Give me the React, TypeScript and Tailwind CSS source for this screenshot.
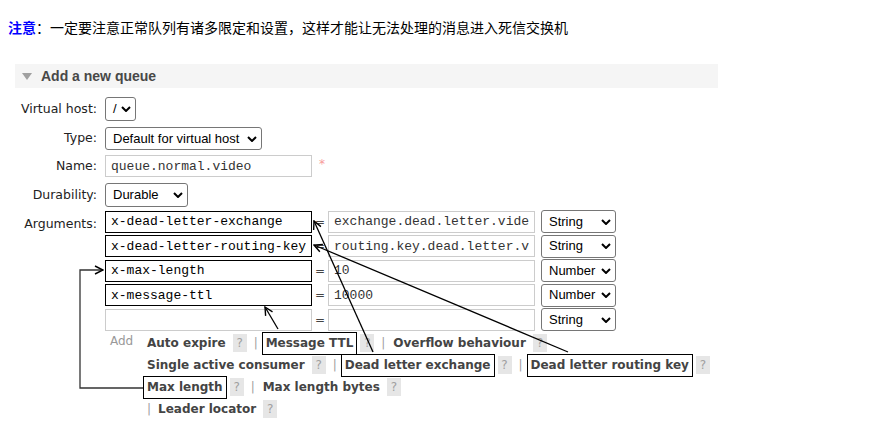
import React from "react";

const dv = "font-['DejaVu_Sans','Verdana',sans-serif]";
const arial = "font-['Liberation_Sans','Arial',sans-serif]";
const mono = "font-['Liberation_Mono','Courier_New',monospace]";

function Chevron() {
  return (
    <svg width="10" height="6" viewBox="0 0 10 6" className="shrink-0">
      <path d="M1 1L5 5L9 1" fill="none" stroke="#000" strokeWidth="2" />
    </svg>
  );
}

function FakeSelect({ value, className }: { value: string; className: string }) {
  return (
    <div
      className={`flex items-center justify-between rounded-[3px] border border-[#767676] bg-white pl-[7px] pr-[4px] text-[13px] text-black ${arial} ${className}`}
    >
      <span className="whitespace-nowrap">{value}</span>
      <Chevron />
    </div>
  );
}

function Help() {
  return (
    <span className="ml-[7px] inline-flex h-[18px] w-[14px] items-center justify-center bg-[#e6e6e6] text-[12px] font-normal text-[#a0a0a0]">
      ?
    </span>
  );
}

function Sep() {
  return <span className="w-[19px] pl-[7px] font-normal text-[#a0a0a0]">|</span>;
}

function Opt({ label, boxed }: { label: string; boxed?: boolean }) {
  return (
    <span
      className={`inline-block leading-[15px] ${
        boxed ? "outline outline-offset-[3px] outline-black" : ""
      }`}
    >
      {label}
    </span>
  );
}

const args = [
  { key: "x-dead-letter-exchange", value: "exchange.dead.letter.video", type: "String", marked: true },
  { key: "x-dead-letter-routing-key", value: "routing.key.dead.letter.video", type: "String", marked: true },
  { key: "x-max-length", value: "10", type: "Number", marked: true },
  { key: "x-message-ttl", value: "10000", type: "Number", marked: true },
  { key: "", value: "", type: "String", marked: false },
];

export default function App() {
  return (
    <div className="relative h-[426px] w-[893px] overflow-hidden bg-white text-[#222]">
      <p className="pl-[8px] pt-[17px] text-[14px] leading-[20px] text-black font-['Noto_Sans_CJK_SC','Microsoft_YaHei',sans-serif]">
        <span className="font-bold text-[#0000ff]">注意</span>：一定要注意正常队列有诸多限定和设置，这样才能让无法处理的消息进入死信交换机
      </p>

      <section className="ml-[15px] mt-[27px] w-[703px]">
        <div className="flex h-[24px] items-center bg-[#f5f5f5] pl-[7px]">
          <svg width="10" height="7" viewBox="0 0 10 7">
            <polygon points="0,0 10,0 5,7" fill="#a0a0a0" />
          </svg>
          <h2 className={`ml-[9px] text-[14px] font-bold text-[#484848] ${arial}`}>Add a new queue</h2>
        </div>

        <div className={`text-[12px] ${dv}`}>
          <div className="mt-[9px] flex h-[24px] items-center">
            <label className="w-[82px] text-right text-[12.5px]">Virtual host:</label>
            <FakeSelect value="/" className="ml-[8px] h-[24px] w-[31px]" />
          </div>
          <div className="mt-[6px] flex h-[23px] items-center">
            <label className="w-[82px] text-right text-[12.5px]">Type:</label>
            <FakeSelect value="Default for virtual host" className="ml-[8px] h-[23px] w-[157px]" />
          </div>
          <div className="mt-[5px] flex h-[22px] items-center">
            <label className="w-[82px] text-right text-[12.5px]">Name:</label>
            <input
              readOnly
              defaultValue="queue.normal.video"
              className={`ml-[8px] h-[22px] w-[207px] border border-[#ccc] px-[5px] text-[13px] text-[#333] outline-none ${mono}`}
            />
            <span className="ml-[7px] self-start text-[12px] text-[#f79a9a]">*</span>
          </div>
          <div className="mt-[6px] flex h-[24px] items-center">
            <label className="w-[82px] text-right text-[12.5px]">Durability:</label>
            <FakeSelect value="Durable" className="ml-[8px] h-[24px] w-[83px]" />
          </div>

          <div className="mt-[3px] flex">
            <label className="w-[82px] pt-[6px] text-right text-[12.5px] leading-[15px]">Arguments:</label>
            <div className="ml-[8px] flex flex-col gap-[1.5px]">
              {args.map((a, i) => (
                <div key={i} className="flex h-[23px] items-center">
                  <input
                    readOnly
                    defaultValue={a.key}
                    className={`h-[22px] w-[207px] px-[5px] text-[13px] text-black outline-none ${mono} ${
                      a.marked ? "border-[1.5px] border-black" : "border border-[#ccc]"
                    }`}
                  />
                  <span className="w-[16px] text-center text-[#444]">=</span>
                  <input
                    readOnly
                    defaultValue={a.value}
                    className={`h-[22px] w-[207px] border border-[#ccc] px-[5px] text-[13px] text-[#333] outline-none ${mono}`}
                  />
                  <FakeSelect value={a.type} className="ml-[6px] h-[23px] w-[75px]" />
                </div>
              ))}
            </div>
          </div>

          <div className="mt-[1px] flex">
            <div className="ml-[90px] w-[42px] pl-[5px] leading-[18px] text-[#999]">Add</div>
            <div className="font-bold text-[#444]">
              <div className="flex h-[22px] items-center">
                <Opt label="Auto expire" />
                <Help />
                <Sep />
                <Opt label="Message TTL" boxed />
                <Help />
                <Sep />
                <Opt label="Overflow behaviour" />
                <Help />
              </div>
              <div className="flex h-[22px] items-center">
                <Opt label="Single active consumer" />
                <Help />
                <Sep />
                <Opt label="Dead letter exchange" boxed />
                <Help />
                <Sep />
                <Opt label="Dead letter routing key" boxed />
                <Help />
              </div>
              <div className="flex h-[22px] items-center">
                <Opt label="Max length" boxed />
                <Help />
                <Sep />
                <Opt label="Max length bytes" />
                <Help />
              </div>
              <div className="flex h-[22px] items-center">
                <span className="pr-[7px] font-normal text-[#a0a0a0]">|</span>
                <Opt label="Leader locator" />
                <Help />
              </div>
            </div>
          </div>
        </div>
      </section>

      {/* hand-drawn annotation arrows */}
      <svg className="pointer-events-none absolute left-0 top-0" width="893" height="426">
        <defs>
          <marker id="head" markerWidth="10" markerHeight="10" refX="9" refY="5" orient="auto" markerUnits="userSpaceOnUse">
            <path d="M1 1L9 5L1 9" fill="none" stroke="#000" strokeWidth="1.4" />
          </marker>
        </defs>
        <g stroke="#000" strokeWidth="1.3" fill="none">
          <line x1="278" y1="329" x2="265" y2="307" markerEnd="url(#head)" />
          <line x1="373" y1="352" x2="314" y2="221" markerEnd="url(#head)" />
          <line x1="568" y1="352" x2="314" y2="245" markerEnd="url(#head)" />
          <polyline points="143,388 80,388 80,270 103,270" stroke="#333" markerEnd="url(#head)" />
        </g>
      </svg>
    </div>
  );
}
